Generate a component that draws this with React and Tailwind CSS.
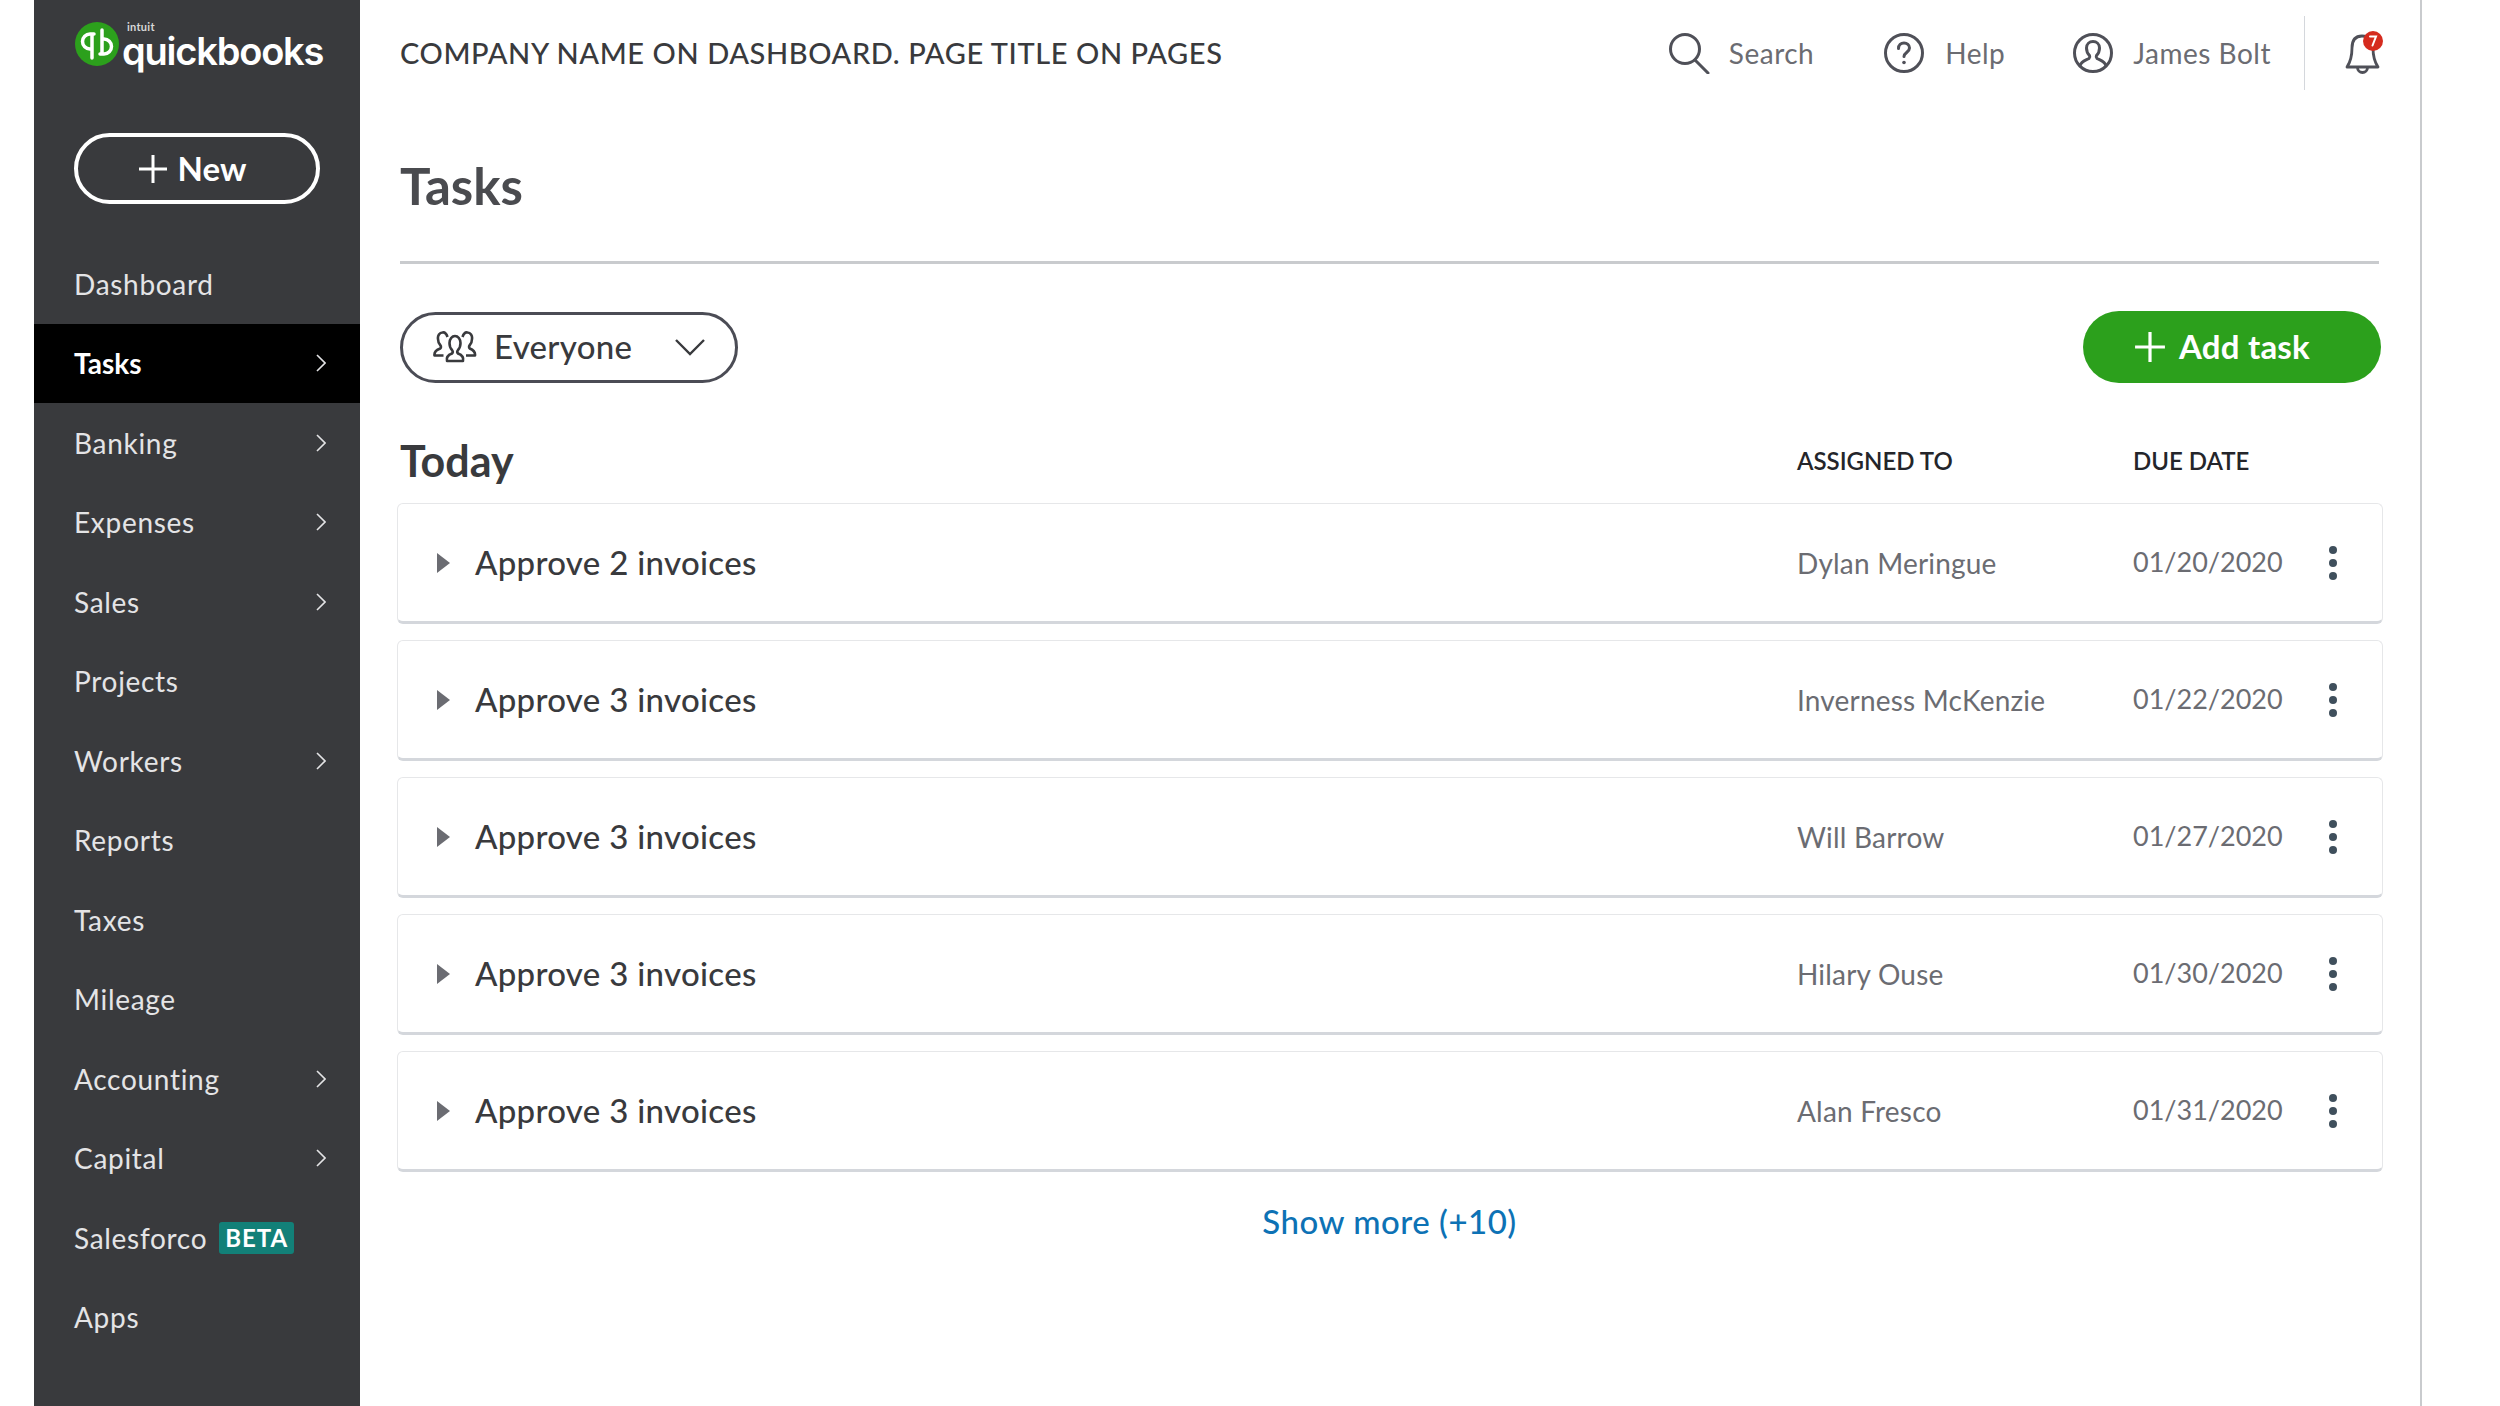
import React from "react";

const font = "font-['Lato','Noto_Sans',sans-serif]";

const navItems = [
  { label: "Dashboard" },
  { label: "Tasks", arrow: true, active: true },
  { label: "Banking", arrow: true },
  { label: "Expenses", arrow: true },
  { label: "Sales", arrow: true },
  { label: "Projects" },
  { label: "Workers", arrow: true },
  { label: "Reports" },
  { label: "Taxes" },
  { label: "Mileage" },
  { label: "Accounting", arrow: true },
  { label: "Capital", arrow: true },
  { label: "Salesforco", badge: true },
  { label: "Apps" },
];

const tasks = [
  { title: "Approve 2 invoices", who: "Dylan Meringue", due: "01/20/2020" },
  { title: "Approve 3 invoices", who: "Inverness McKenzie", due: "01/22/2020" },
  { title: "Approve 3 invoices", who: "Will Barrow", due: "01/27/2020" },
  { title: "Approve 3 invoices", who: "Hilary Ouse", due: "01/30/2020" },
  { title: "Approve 3 invoices", who: "Alan Fresco", due: "01/31/2020" },
];

function Logo() {
  return (
    <svg width="46" height="46" viewBox="0 0 46 46" className="shrink-0">
      <circle cx="23" cy="23" r="22" fill="#2ca01c" />
      <path d="M20 13h-4a7.500 7.500 0 0 0 0 15h2V12v25" fill="none" stroke="#fff" strokeWidth="3.500" strokeLinecap="round" />
      <path d="M26 33h4a7.500 7.500 0 0 0 0-15h-2v16V9" fill="none" stroke="#fff" strokeWidth="3.500" strokeLinecap="round" />
    </svg>
  );
}

function Chevron() {
  return (
    <svg width="10" height="18" viewBox="0 0 10 18" fill="none" stroke="#e4e4e6" strokeWidth="1.600">
      <path d="M1 1l8 8-8 8" />
    </svg>
  );
}

function PlusIcon({ size = 30 }) {
  return (
    <svg width={size} height={size} viewBox="0 0 30 30" fill="none" stroke="#fff" strokeWidth="3" className="shrink-0">
      <path d="M15 1v28M1 15h28" />
    </svg>
  );
}

function SearchIcon() {
  return (
    <svg width="42" height="42" viewBox="0 0 42 42" fill="none" stroke="#4f5058" strokeWidth="3" strokeLinecap="round">
      <circle cx="17" cy="17" r="14.500" />
      <path d="M27 28l13 13" />
    </svg>
  );
}

function HelpIcon() {
  return (
    <svg width="40" height="40" viewBox="0 0 40 40" fill="none" stroke="#4f5058" strokeWidth="3" strokeLinecap="round">
      <circle cx="20" cy="20" r="18.500" />
      <path d="M14.500 15.500c0-3.500 2.500-5.500 5.500-5.500s5.500 2 5.500 5c0 4.500-5.500 4.500-5.500 8.500" strokeWidth="3" />
      <circle cx="20" cy="29.500" r="1.800" fill="#4f5058" stroke="none" />
    </svg>
  );
}

function UserIcon() {
  return (
    <svg width="40" height="40" viewBox="0 0 40 40" fill="none" stroke="#4f5058" strokeWidth="3">
      <circle cx="20" cy="20" r="18.500" />
      <path d="M7 33c1-5 5-5.500 9-7.500 1-1 1-2 .5-3-2-2-3-4.500-3-7.500 0-4 3-6.500 6.500-6.500s6.500 2.500 6.500 6.500c0 3-1 5.500-3 7.500-.5 1-.5 2 .5 3 4 2 8 2.500 9 7.500" />
    </svg>
  );
}

function BellIcon() {
  return (
    <svg width="42" height="44" viewBox="0 0 42 44" fill="none" className="shrink-0">
      <path d="M20 5c-7 0-10 5-10 12 0 8-1 13-5 19h31c-4-6-5-11-5-19 0-7-3-12-11-12z" stroke="#4f5058" strokeWidth="2.800" strokeLinejoin="round" />
      <path d="M15.500 36.500a5 5 0 0 0 10 0" stroke="#4f5058" strokeWidth="2.800" />
      <circle cx="31" cy="10" r="10" fill="#d52b1e" />
      <path d="M28 5.500h6l-3.500 9" stroke="#fff" strokeWidth="2" strokeLinecap="round" />
    </svg>
  );
}

function GroupIcon() {
  return (
    <svg width="44" height="36" viewBox="0 0 44 36" fill="none" stroke="#393a3d" strokeWidth="2.600" strokeLinejoin="round" className="shrink-0">
      <path d="M14 32h16c1-4-1-6-5-7.500-1-1-.8-2.500 0-3.500 1.500-1.500 2.500-4 2.500-7 0-4-2.500-7-5.500-7s-5.500 3-5.500 7c0 3 1 5.500 2.500 7 .8 1 1 2.500 0 3.500-4 1.500-6 3.500-5 7.500z" />
      <path d="M14.500 8c-1-3-3-5-5-4.500-3 0-5 3-4.500 6.500 0 3 1 5 2.500 6.500.6 1 .6 2-.2 3C3 21 1 23 1.500 26.500h9" />
      <path d="M29.500 8c1-3 3-5 5-4.500 3 0 5 3 4.500 6.500 0 3-1 5-2.500 6.500-.6 1-.6 2 .2 3 3.800 1.500 5.800 3.500 5.300 7h-9" />
    </svg>
  );
}

function Sidebar() {
  return (
    <aside className="w-[326px] h-[1406px] shrink-0 bg-[#393a3d] text-white">
      {/* Logo */}
      <div className="h-[133px] pl-[40px] pt-[21px] flex items-start">
        <Logo />
        <div className="ml-[2px] -mt-[2px] flex flex-col">
          <span className="h-[11px] text-[11px] leading-[11px] pl-[5px] mt-[2px] font-bold text-[#d8d8d8] tracking-wide">intuit</span>
          <span className="text-[38px] leading-[38px] font-['Inter',sans-serif] font-semibold tracking-[-1.200px]">quickbooks</span>
        </div>
      </div>

      <div className="pl-[40px]">
        <button className="w-[246px] h-[71px] pr-[10px] rounded-full border-[4px] border-white flex items-center justify-center gap-[10px] text-[33px] font-bold">
          <PlusIcon />
          New
        </button>
      </div>

      <nav className="mt-[40px]">
        {navItems.map((item) => (
          <div
            key={item.label}
            className={`h-[79.500px] pl-[40px] pr-[34px] flex items-center justify-between text-[28px] ${
              item.active ? "bg-black font-bold text-white" : "text-[#e4e4e6] tracking-[0.700px]"
            }`}
          >
            <span className="flex items-center gap-[12px]">
              {item.label}
              {item.badge && (
                <span className="w-[75px] h-[32px] rounded-[3px] bg-[#128078] text-white text-[24px] leading-[32px] font-bold text-center tracking-[1px]">
                  BETA
                </span>
              )}
            </span>
            {item.arrow && <Chevron />}
          </div>
        ))}
      </nav>
    </aside>
  );
}

function TopBar() {
  return (
    <header className="h-[105px] flex items-center justify-between">
      <h2 className="text-[29px] font-medium tracking-[0.600px] text-[#393a3d]">COMPANY NAME ON DASHBOARD. PAGE TITLE ON PAGES</h2>
      <div className="flex items-center text-[28px] tracking-[0.500px] text-[#6b6c72]">
        <SearchIcon />
        <span className="ml-[19px]">Search</span>
        <span className="ml-[70px]"><HelpIcon /></span>
        <span className="ml-[21px]">Help</span>
        <span className="ml-[68px]"><UserIcon /></span>
        <span className="ml-[20px]">James Bolt</span>
        <div className="ml-[33px] w-px h-[74px] bg-[#d4d7dc]" />
        <span className="ml-[37px] -mr-[5px]"><BellIcon /></span>
      </div>
    </header>
  );
}

function TaskRow({ task }) {
  return (
    <div className="h-[121px] rounded-[6px] border border-[#e6e7e9] border-b-[3px] border-b-[#d4d7dc] bg-white flex items-center">
      <svg width="14" height="20" viewBox="0 0 14 20" className="ml-[38px] shrink-0">
        <path d="M1 0l13 10L1 20z" fill="#6b6c72" />
      </svg>
      <span className="ml-[25px] flex-1 text-[33px] font-medium tracking-[0.300px] text-[#393a3d]">{task.title}</span>
      <span className="w-[336px] text-[28px] tracking-[0.200px] text-[#6b6c72]">{task.who}</span>
      <span className="w-[196px] text-[27px] tracking-[0px] text-[#6b6c72]">{task.due}</span>
      <span className="w-[53px] flex flex-col items-start gap-[5px]">
        <span className="w-[8px] h-[8px] rounded-full bg-[#3f4f5c]" />
        <span className="w-[8px] h-[8px] rounded-full bg-[#3f4f5c]" />
        <span className="w-[8px] h-[8px] rounded-full bg-[#3f4f5c]" />
      </span>
    </div>
  );
}

export default function App() {
  return (
    <div className={`flex w-[2500px] h-[1406px] overflow-hidden bg-white pl-[34px] pr-[78px] ${font}`}>
      <Sidebar />
      <main className="flex-1 pl-[40px] pr-[41px] border-r-[2px] border-[#c9cbce]">
        <TopBar />
        <h1 className="mt-[53px] text-[51px] leading-[56px] font-bold text-[#4a4b4f]">Tasks</h1>
        <div className="mt-[47px] h-[3px] bg-[#c9cbce]" />

        <div className="mt-[47px] -mr-[2px] flex items-center justify-between">
          <button className="w-[338px] h-[71px] rounded-full border-[3px] border-[#4b4c55] pl-[30px] pr-[30px] flex items-center text-[33px] font-medium text-[#393a3d]">
            <GroupIcon />
            <span className="ml-[17px] flex-1 text-left tracking-[0.300px]">Everyone</span>
            <svg width="30" height="18" viewBox="0 0 30 18" fill="none" stroke="#393a3d" strokeWidth="2.400">
              <path d="M1 2l14 14L29 2" />
            </svg>
          </button>
          <button className="w-[298px] h-[72px] pr-[20px] rounded-full bg-[#2ca01c] flex items-center justify-center gap-[13px] text-[33px] tracking-[0.200px] font-bold text-white">
            <PlusIcon size={32} />
            Add task
          </button>
        </div>

        <div className="mt-[48px] flex items-center h-[60px]">
          <h3 className="flex-1 text-[43px] font-bold text-[#393a3d]">Today</h3>
          <span className="w-[336px] text-[24px] font-semibold text-[#24252a]">ASSIGNED TO</span>
          <span className="w-[246px] text-[24px] font-semibold text-[#24252a]">DUE DATE</span>
        </div>

        <div className="mt-[12px] -ml-[3px] -mr-[4px] flex flex-col gap-[16px]">
          {tasks.map((task) => (
            <TaskRow key={task.who} task={task} />
          ))}
        </div>

        <p className="mt-[25px] text-center text-[33px] font-medium tracking-[0.500px] text-[#0d72b5]">Show more (+10)</p>
      </main>
    </div>
  );
}
